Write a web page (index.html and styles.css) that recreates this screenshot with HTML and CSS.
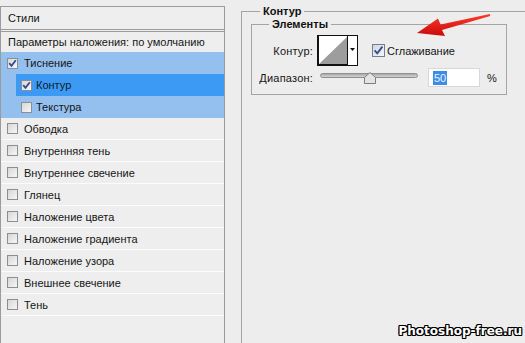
FILE: index.html
```html
<!DOCTYPE html>
<html lang="ru">
<head>
<meta charset="utf-8">
<title>Стиль слоя — Контур</title>
<link rel="stylesheet" href="styles.css">
</head>
<body>
<div class="window">
  <aside class="styles">
    <div class="styles-head">Стили</div>
    <div class="row row-blend">Параметры наложения: по умолчанию</div>
    <div class="row row-group"><span class="cb"><svg viewBox="0 0 11 11"><path d="M2.2 5.2 L4.5 7.8 L8.8 2.2"/></svg></span>Тиснение</div>
    <div class="sub"><div class="row row-sel"><span class="cb"><svg viewBox="0 0 11 11"><path d="M2.2 5.2 L4.5 7.8 L8.8 2.2"/></svg></span>Контур</div></div>
    <div class="sub"><div class="row row-subitem"><span class="cb"></span>Текстура</div></div>
    <div class="row row-plain"><span class="cb"></span>Обводка</div>
    <div class="row row-plain"><span class="cb"></span>Внутренняя тень</div>
    <div class="row row-plain"><span class="cb"></span>Внутреннее свечение</div>
    <div class="row row-plain"><span class="cb"></span>Глянец</div>
    <div class="row row-plain"><span class="cb"></span>Наложение цвета</div>
    <div class="row row-plain"><span class="cb"></span>Наложение градиента</div>
    <div class="row row-plain"><span class="cb"></span>Наложение узора</div>
    <div class="row row-plain"><span class="cb"></span>Внешнее свечение</div>
    <div class="row row-plain"><span class="cb"></span>Тень</div>
  </aside>
  <main class="settings">
    <fieldset class="group outer">
      <legend>Контур</legend>
      <fieldset class="group inner">
        <legend>Элементы</legend>
        <div class="line line-contour">
          <span class="lbl">Контур:</span>
          <span class="picker">
            <svg viewBox="0 0 41 31" width="41" height="31">
              <rect x="0.5" y="0.5" width="40" height="30" fill="#fff" stroke="#111"/>
              <rect x="1" y="1" width="1" height="29" fill="#111"/>
              <rect x="1" y="29" width="30" height="1" fill="#111"/>
              <polygon points="2,29 30,2 30,29" fill="#9d9d9d"/>
              <line x1="30.5" y1="1" x2="30.5" y2="30" stroke="#111"/>
              <polygon points="33,13 38,13 35.5,16" fill="#111"/>
            </svg>
          </span>
          <label class="check"><span class="cb cb-lg"><svg viewBox="0 0 13 13"><path d="M2.6 6.4 L5.3 9.4 L10.4 2.6"/></svg></span>Сглаживание</label>
        </div>
        <div class="line line-range">
          <span class="lbl">Диапазон:</span>
          <span class="slider">
            <span class="track"></span>
            <svg class="thumb" viewBox="0 0 12 12" width="12" height="12" style="left:44px">
              <polygon points="0.5,11.5 0.5,5.5 6,0.5 11.5,5.5 11.5,11.5" fill="#e4e4e4" stroke="#7c7c7c"/>
            </svg>
          </span>
          <span class="num"><span class="sel">50</span></span>
          <span class="pct">%</span>
        </div>
      </fieldset>
    </fieldset>
  </main>
</div>
<svg class="arrow" viewBox="0 0 90 32" width="90" height="32">
  <defs>
    <linearGradient id="ar" x1="0" y1="0" x2="0" y2="1">
      <stop offset="0" stop-color="#ff3a2a"/>
      <stop offset="1" stop-color="#c80a0a"/>
    </linearGradient>
  </defs>
  <polygon points="7,25 28,10.5 30.6,16.6 79.8,6 80.2,8 32,22 35,28" fill="url(#ar)"/>
</svg>
<div class="watermark">Photoshop-free.ru</div>
</body>
</html>
```

FILE: styles.css
```css
html, body {
  margin: 0;
  padding: 0;
}
body {
  width: 525px;
  height: 343px;
  overflow: hidden;
  background: #ededed;
  font-family: "Liberation Sans", Arial, sans-serif;
  font-size: 11px;
  color: #151515;
  position: relative;
}
.window {
  display: flex;
  align-items: flex-start;
  height: 343px;
}

/* left list of styles */
.styles {
  width: 225px;
  box-sizing: border-box;
  margin-top: 6px;
  height: 337px;
  border: 1px solid #9b9b9b;
  border-bottom: none;
  background: #eeeeee;
  flex: none;
}
.styles-head {
  height: 22px;
  line-height: 22px;
  padding-left: 7px;
  border-bottom: 3px double #9b9b9b;
}
.row {
  display: flex;
  align-items: center;
  gap: 6px;
  height: 22px;
  box-sizing: border-box;
  padding-left: 6px;
}
.row-blend {
  height: 20px;
  padding-left: 7px;
}
.row-group {
  background: #94c0ef;
}
.sub {
  background: #94c0ef;
  padding-left: 15px;
}
.sub .row {
  padding-left: 5px;
  gap: 4px;
}
.row-sel {
  background: #3d9af4;
  color: #0d1a2c;
}
.row-subitem {
  background: #94c0ef;
}
.row-plain {
  border-bottom: 1px solid #fbfbfb;
}

/* checkbox */
.cb {
  width: 11px;
  height: 11px;
  box-sizing: border-box;
  border: 1px solid #8e8e8e;
  background: linear-gradient(135deg, #d6d6d6, #f7f7f7);
  flex: none;
  display: block;
}
.cb svg {
  display: block;
  margin: -1px;
  width: 11px;
  height: 11px;
}
.cb path {
  fill: none;
  stroke: #2c4c9c;
  stroke-width: 1.8;
}
.cb-lg {
  width: 13px;
  height: 13px;
  border-color: #6f7f97;
}
.cb-lg svg {
  width: 13px;
  height: 13px;
}

/* right settings */
.settings {
  flex: 1;
  margin-left: 16px;
  min-width: 0;
}
.group {
  margin: 0;
  border: 1px solid #a4a4a4;
  padding: 0;
  min-width: 0;
}
.group > legend {
  font-weight: bold;
  padding: 0 3px;
  line-height: 13px;
  font-size: 11px;
  color: #111;
}
.outer {
  margin-top: 5px;
  margin-right: -20px;
  height: 338px;
  box-sizing: border-box;
  border-bottom: none;
  padding-left: 9px;
}
.outer > legend {
  margin-left: 9px;
}
.inner {
  width: 254px;
  padding: 4px 0 7px 0;
}
.inner > legend {
  margin-left: 17px;
}
.line {
  display: flex;
  align-items: center;
}
.lbl {
  width: 61px;
  text-align: right;
  flex: none;
  letter-spacing: 0.2px;
}
.line-contour {
  height: 31px;
}
.picker {
  margin-left: 4px;
  display: block;
  height: 31px;
}
.picker svg {
  display: block;
}
.check {
  margin-left: 14px;
  display: flex;
  align-items: center;
  gap: 2px;
}
.line-range {
  margin-top: 2px;
  height: 19px;
}
.slider {
  position: relative;
  margin-left: 7px;
  width: 98px;
  height: 19px;
  display: flex;
  align-items: center;
}
.track {
  display: block;
  width: 100%;
  height: 5px;
  box-sizing: border-box;
  border: 1px solid #8f8f8f;
  border-radius: 3px;
  background: linear-gradient(#a9a9a9, #d4d4d4);
  margin-top: -5px;
}
.thumb {
  position: absolute;
  top: 4px;
  display: block;
}
.num {
  margin-left: 10px;
  width: 52px;
  height: 19px;
  box-sizing: border-box;
  background: #fff;
  border: 1px solid #d8d8d8;
  display: flex;
  align-items: center;
  padding-left: 4px;
}
.sel {
  background: #3b8ee6;
  color: #e8f2ff;
  padding: 1px 1px;
  line-height: 12px;
}
.pct {
  margin-left: 7px;
}

/* overlays */
.arrow {
  position: absolute;
  left: 410px;
  top: 8px;
}
.watermark {
  position: absolute;
  right: 3px;
  bottom: 5px;
  font-family: "DejaVu Sans", Verdana, sans-serif;
  font-weight: bold;
  font-size: 12px;
  color: #fff;
  text-shadow: 1px 0 0 #000, -1px 0 0 #000, 0 1px 0 #000, 0 -1px 0 #000,
    1px 1px 0 #000, -1px -1px 0 #000, 1px -1px 0 #000, -1px 1px 0 #000;
}
```
